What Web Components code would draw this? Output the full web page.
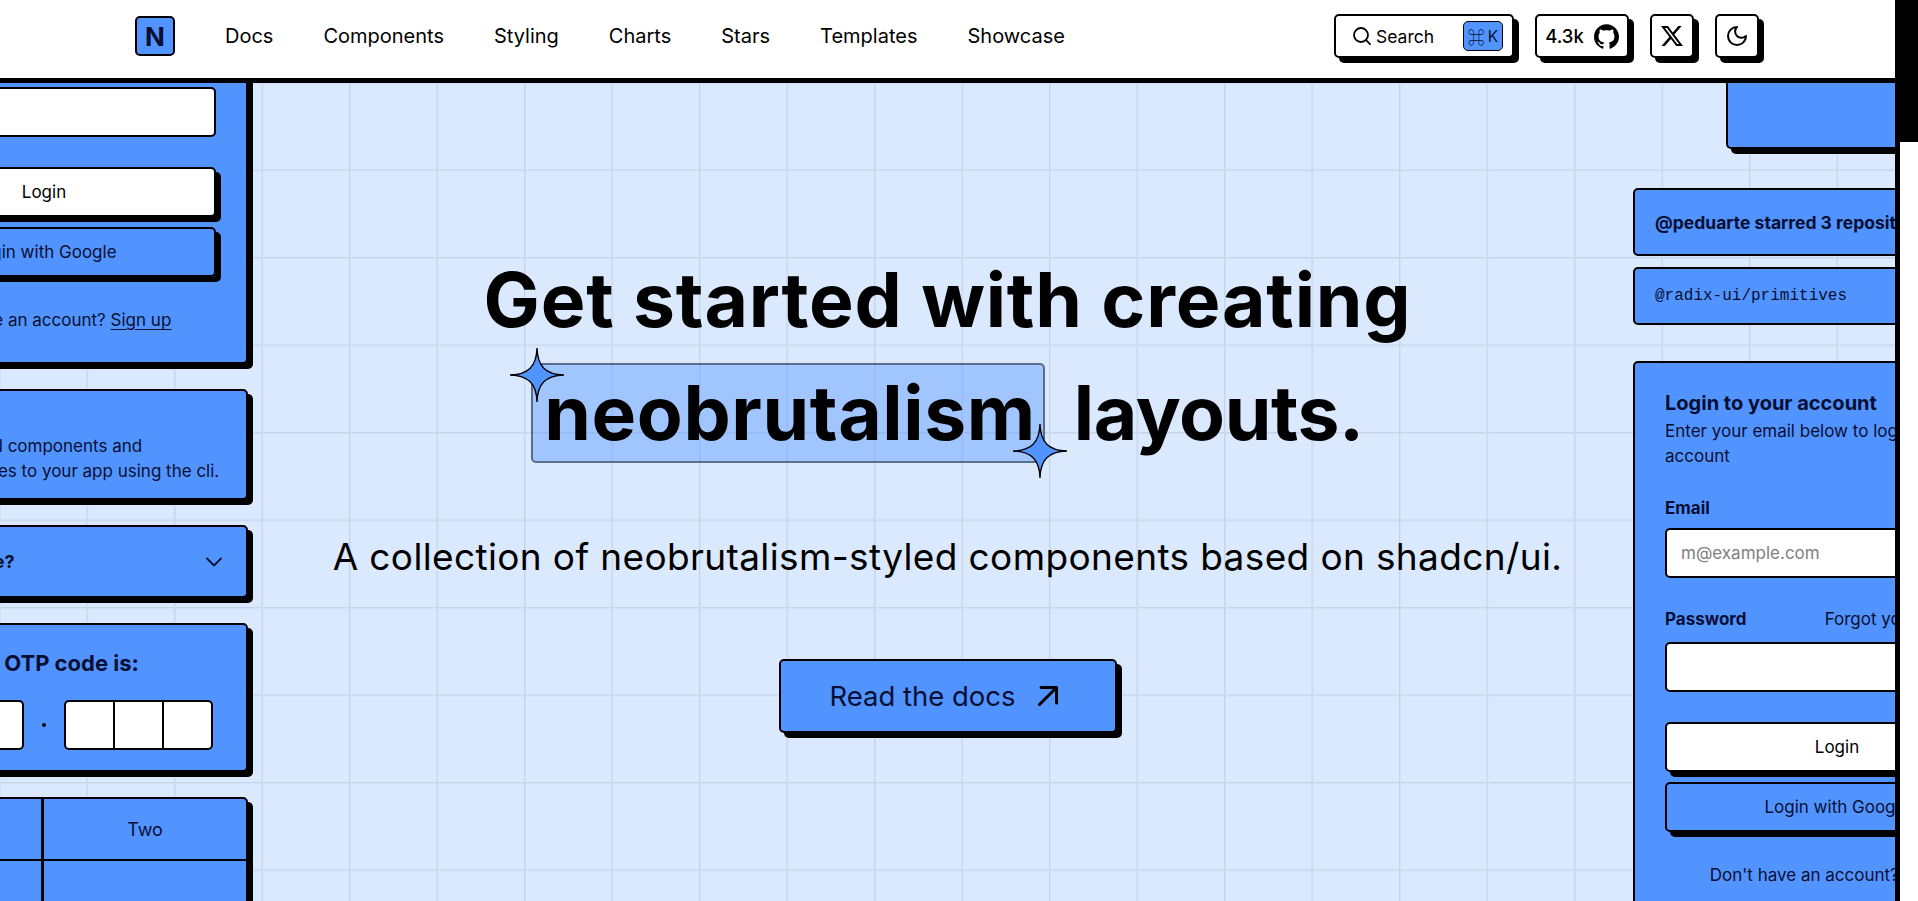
<!DOCTYPE html>
<html lang="en">
<head>
<meta charset="utf-8">
<title>neobrutalism components</title>
<style>
	html, body { margin: 0; padding: 0; height: 901px; overflow: hidden; background: #fff; }
	body { font-family: Inter, "Liberation Sans", sans-serif; color: #000; }
	app-shell { --main: #5294ff; --bg: #dbe9fe; --on-main: #060f33; }
</style>
</head>
<body>
<app-shell>
	<site-nav slot="nav"></site-nav>
	<hero-section slot="main"></hero-section>
</app-shell>

<script>
const icons = {
	search: `<svg width="18" height="18" viewBox="0 0 18 18" fill="none" stroke="currentColor" stroke-width="1.8" stroke-linecap="round"><circle cx="8" cy="8" r="7"/><path d="M13 13l4 4.2"/></svg>`,
	github: `<svg width="25" height="25" viewBox="0 0 24 24" fill="currentColor"><path d="M12 .297c-6.63 0-12 5.373-12 12 0 5.303 3.438 9.8 8.205 11.385.6.113.82-.258.82-.577 0-.285-.01-1.04-.015-2.04-3.338.724-4.042-1.61-4.042-1.61C4.422 18.07 3.633 17.7 3.633 17.7c-1.087-.744.084-.729.084-.729 1.205.084 1.838 1.236 1.838 1.236 1.07 1.835 2.809 1.305 3.495.998.108-.776.417-1.305.76-1.605-2.665-.3-5.466-1.332-5.466-5.93 0-1.31.465-2.38 1.235-3.22-.135-.303-.54-1.523.105-3.176 0 0 1.005-.322 3.3 1.23.96-.267 1.98-.399 3-.405 1.02.006 2.04.138 3 .405 2.28-1.552 3.285-1.23 3.285-1.23.645 1.653.24 2.873.12 3.176.765.84 1.23 1.91 1.23 3.22 0 4.61-2.805 5.625-5.475 5.92.42.36.81 1.096.81 2.22 0 1.606-.015 2.896-.015 3.286 0 .315.21.69.825.57C20.565 22.092 24 17.592 24 12.297c0-6.627-5.373-12-12-12"/></svg>`,
	x: `<svg width="22" height="22" viewBox="0 0 24 24" fill="currentColor"><path d="M18.901 1.153h3.68l-8.04 9.19L24 22.846h-7.406l-5.8-7.584-6.638 7.584H.474l8.6-9.83L0 1.154h7.594l5.243 6.932ZM17.61 20.644h2.039L6.486 3.24H4.298Z"/></svg>`,
	moon: `<svg width="24" height="24" viewBox="0 0 24 24" fill="none" stroke="currentColor" stroke-width="2" stroke-linecap="round" stroke-linejoin="round"><path d="M12 3a6 6 0 0 0 9 9 9 9 0 1 1-9-9Z"/></svg>`,
	arrow: `<svg width="24" height="24" viewBox="0 0 24 24" fill="none" stroke="#000" stroke-width="3" stroke-linecap="round" stroke-linejoin="round"><path d="M3.5 20.5L20 4"/><path d="M5 3.500H20.500V19"/></svg>`,
	chevron: `<svg width="16" height="10" viewBox="0 0 16 10" fill="none" stroke="currentColor" stroke-width="1.8" stroke-linecap="round" stroke-linejoin="round"><path d="M1 1.500l7 7 7-7"/></svg>`,
	star: `<svg width="54" height="54" viewBox="0 0 100 100"><path d="M50 0C51 34 66 49 100 50 66 51 51 66 50 100 49 66 34 51 0 50 34 49 49 34 50 0Z" fill="#5294ff" stroke="#000" stroke-width="2.5" stroke-linejoin="round"/></svg>`
};

// page frame: bars, border on the right, then the scroll rail
customElements.define("app-shell", class extends HTMLElement {
	connectedCallback() {
		this.attachShadow({ mode: "open" });
		this.shadowRoot.innerHTML = `
		<style>
			:host { display: grid; grid-template-columns: 1900px 18px; width: 1918px; height: 901px; overflow: hidden; }
			.page { display: flex; flex-direction: column; height: 901px; border-right: 5px solid #000; box-sizing: border-box; min-width: 0; }
			.rail { background: #fff; }
			.thumb { height: 142px; background: #000; }
		</style>
		<div class="page"><slot name="nav"></slot><slot name="main"></slot></div>
		<div class="rail"><div class="thumb"></div></div>`;
	}
});

customElements.define("neo-btn", class extends HTMLElement {
	connectedCallback() {
		this.attachShadow({ mode: "open" });
		this.shadowRoot.innerHTML = `
		<style>
			:host { display: inline-flex; box-sizing: border-box; align-items: center; justify-content: center; height: 44px; background: #fff; border: 2px solid #000; border-radius: 5px; box-shadow: 5px 5px 0 #000; }
		</style>
		<slot></slot>`;
	}
});

customElements.define("site-nav", class extends HTMLElement {
	connectedCallback() {
		const links = ["Docs", "Components", "Styling", "Charts", "Stars", "Templates", "Showcase"];
		this.attachShadow({ mode: "open" });
		this.shadowRoot.innerHTML = `
		<style>
			:host { display: flex; flex: none; height: 72px; align-items: center; background: #fff; border-bottom: 5px solid #000; padding: 0 136px 6px 135px; position: relative; z-index: 2; }
			.logo { width: 40px; height: 40px; box-sizing: border-box; display: flex; align-items: center; justify-content: center; background: var(--main); border: 2px solid #000; border-radius: 5px; font-size: 26px; font-weight: 700; color: var(--on-main); margin-right: 50px; }
			nav { display: flex; gap: 50px; font-size: 20px; font-weight: 400; flex: 1; }
			.tools { display: flex; align-items: center; gap: 21px; }
			.search { width: 180px; justify-content: flex-start; padding: 0 9px 0 17px; font-size: 17.500px; gap: 5px; }
			kbd { margin-left: auto; width: 40px; height: 30px; box-sizing: border-box; display: flex; align-items: center; justify-content: center; gap: 3px; background: var(--main); border: 1px solid #000; border-radius: 5px; color: var(--on-main); font: 400 15.500px Inter, sans-serif; }
			kbd span:first-child { font: 300 17px "Noto Sans CJK JP", "DejaVu Sans", sans-serif; }
			.stars { width: 94px; gap: 10px; font-size: 18.500px; font-weight: 500; }
			.square { width: 44px; }
			svg { display: block; }
		</style>
		<div class="logo">N</div>
		<nav>${links.map(l => `<span>${l}</span>`).join("")}</nav>
		<div class="tools">
			<neo-btn class="search">${icons.search}<span>Search</span><kbd><span>⌘</span><span>K</span></kbd></neo-btn>
			<neo-btn class="stars"><span>4.3k</span>${icons.github}</neo-btn>
			<neo-btn class="square">${icons.x}</neo-btn>
			<neo-btn class="square">${icons.moon}</neo-btn>
		</div>`;
	}
});

// same card is used on both sides, the viewport crops it
customElements.define("login-card", class extends HTMLElement {
	connectedCallback() {
		this.attachShadow({ mode: "open" });
		this.shadowRoot.innerHTML = `
		<style>
			:host { display: block; box-sizing: border-box; width: 408px; height: 558px; background: var(--main); color: var(--on-main); border: 2px solid #000; border-radius: 5px; box-shadow: 5px 5px 0 #000; padding: 26px 30px 0; font-size: 17px; }
			h3 { margin: 0; font-size: 20px; line-height: 28px; font-weight: 700; }
			p { margin: 2px 0 0; line-height: 25px; }
			label { display: flex; justify-content: space-between; line-height: 24px; font-weight: 700; font-size: 17px; }
			label span { font-weight: 400; font-size: 17px; }
			.field { box-sizing: border-box; height: 50px; background: #fff; border: 2px solid #000; border-radius: 5px; padding: 0 14px; display: flex; align-items: center; color: #808080; }
			.btn { box-sizing: border-box; height: 50px; display: flex; align-items: center; justify-content: center; border: 2px solid #000; border-radius: 5px; box-shadow: 5px 5px 0 #000; font-weight: 400; }
			.white { background: #fff; color: #000; }
			.foot { text-align: center; margin-top: 31px; line-height: 24px; }
			u { text-underline-offset: 3px; }
		</style>
		<h3>Login to your account</h3>
		<p>Enter your email below to login to your account</p>
		<label style="margin-top:27px">Email</label>
		<div class="field" style="margin-top:8px">m@example.com</div>
		<label style="margin-top:29px">Password<span>Forgot your password?</span></label>
		<div class="field" style="margin-top:11px"></div>
		<div class="btn white" style="margin-top:30px">Login</div>
		<div class="btn" style="margin-top:10px">Login with Google</div>
		<div class="foot">Don't have an account? <u>Sign up</u></div>`;
	}
});

customElements.define("neo-card", class extends HTMLElement {
	connectedCallback() {
		this.attachShadow({ mode: "open" });
		this.shadowRoot.innerHTML = `
		<style>
			:host { display: block; box-sizing: border-box; width: 408px; background: var(--main); color: var(--on-main); border: 2px solid #000; border-radius: 5px; box-shadow: 5px 5px 0 #000; overflow: hidden; }
			:host([flat]) { box-shadow: none; }
		</style>
		<slot></slot>`;
	}
});

customElements.define("left-stack", class extends HTMLElement {
	connectedCallback() {
		this.attachShadow({ mode: "open" });
		this.shadowRoot.innerHTML = `
		<style>
			:host { display: flex; flex-direction: column; align-items: flex-end; gap: 25px; padding-right: 14px; margin-top: -277px; font-size: 17px; }
			.alert { height: 111px; padding: 43px 10px 0 61px; box-sizing: border-box; line-height: 25px; white-space: nowrap; }
			.alert b { display: block; margin-top: -25px; }
			.accordion { height: 73px; display: flex; align-items: center; justify-content: space-between; padding: 0 24px 0 33px; box-sizing: border-box; font-weight: 700; font-size: 18px; }
			svg { display: block; }
			.otp { height: 149px; box-sizing: border-box; text-align: center; padding-top: 24px; }
			.otp h4 { margin: 0; font-size: 22px; line-height: 28px; font-weight: 700; }
			.groups { display: flex; justify-content: center; align-items: center; margin-top: 23px; gap: 18px; }
			.group { display: flex; background: #fff; border: 2px solid #000; border-radius: 5px; height: 50px; box-sizing: border-box; }
			.group i { width: 47px; border-left: 2px solid #000; }
			.group i:first-child { border-left: 0; }
			.dot { width: 4px; height: 4px; border-radius: 50%; background: #000; }
			.table { height: 200px; display: grid; grid-template-columns: 202px 1fr; grid-template-rows: 62px 1fr; font-size: 18px; }
			.table div { display: flex; align-items: center; justify-content: center; }
			.table div:nth-child(odd) { border-right: 3px solid #000; }
			.table div:nth-child(-n+2) { border-bottom: 2px solid #000; }
		</style>
		<login-card></login-card>
		<neo-card class="alert"><b>Heads up!</b>You can add components and<br>dependencies to your app using the cli.</neo-card>
		<neo-card class="accordion"><span>Is it accessible?</span>${icons.chevron}</neo-card>
		<neo-card class="otp"><h4>Your OTP code is:</h4>
			<div class="groups">
				<div class="group"><i></i><i></i><i></i></div>
				<div class="dot"></div>
				<div class="group"><i></i><i></i><i></i></div>
			</div>
		</neo-card>
		<neo-card class="table"><div>One</div><div>Two</div><div></div><div></div></neo-card>`;
	}
});

customElements.define("right-stack", class extends HTMLElement {
	connectedCallback() {
		this.attachShadow({ mode: "open" });
		this.shadowRoot.innerHTML = `
		<style>
			:host { display: flex; flex-direction: column; align-items: flex-start; font-size: 17px; }
			.top { width: 400px; height: 66px; margin-left: 93px; border-top: 0; border-radius: 0 0 5px 5px; }
			.row { display: flex; align-items: center; padding-left: 20px; box-sizing: border-box; white-space: nowrap; }
			.repo { height: 68px; margin-top: 39px; font-weight: 700; font-size: 17.500px; }
			.mono { height: 58px; margin-top: 11px; font: 400 16px "Liberation Mono", monospace; }
			login-card { margin-top: 36px; }
		</style>
		<neo-card class="top"></neo-card>
		<neo-card flat class="row repo">@peduarte starred 3 repositories</neo-card>
		<neo-card flat class="row mono">@radix-ui/primitives</neo-card>
		<login-card></login-card>`;
	}
});

customElements.define("spark-mark", class extends HTMLElement {
	connectedCallback() {
		this.attachShadow({ mode: "open" });
		this.shadowRoot.innerHTML = `
		<style>
			:host { display: block; position: absolute; width: 54px; height: 54px; z-index: 1; }
			svg { display: block; }
		</style>
		${icons.star}`;
	}
});

customElements.define("hero-section", class extends HTMLElement {
	connectedCallback() {
		this.attachShadow({ mode: "open" });
		this.shadowRoot.innerHTML = `
		<style>
			:host { display: grid; grid-template-columns: 262px 1fr 262px; flex: 1; min-height: 0; overflow: hidden; background-color: var(--bg); background-image: linear-gradient(to right, #c6d4e9 1px, #d3e0f4 1px, #d3e0f4 2px, transparent 2px), linear-gradient(to bottom, #c6d4e9 1px, #d3e0f4 1px, #d3e0f4 2px, transparent 2px); background-size: 87.500px 87.500px; background-position: -1px -1px; }
			.center { display: flex; flex-direction: column; align-items: center; padding-top: 160px; }
			h1 { margin: 0; font-size: 75px; line-height: 113px; font-weight: 700; text-align: center; letter-spacing: 0.800px; white-space: nowrap; }
			.mark { position: relative; display: inline-block; box-sizing: border-box; height: 100px; line-height: 96px; padding: 0 7px 0 11px; margin-right: 29px; letter-spacing: 0.600px; background: rgba(82, 148, 255, 0.42); border: 2px solid rgba(0, 0, 0, 0.45); border-radius: 5px; vertical-align: top; margin-top: 7px; }
			.tl { left: -23px; top: -17px; }
			.br { right: -24px; bottom: -17px; }
			.tail { letter-spacing: -0.400px; }
			.lead { margin: 63px 0 0; font-size: 37px; line-height: 50px; letter-spacing: 0.370px; white-space: nowrap; }
			.cta { display: flex; align-items: center; justify-content: center; gap: 20px; box-sizing: border-box; width: 338px; height: 74px; margin-top: 77px; padding-right: 6px; background: var(--main); color: var(--on-main); border: 2px solid #000; border-radius: 5px; box-shadow: 5px 5px 0 #000; font-size: 27.500px; font-weight: 400; }
			svg { display: block; }
		</style>
		<left-stack></left-stack>
		<div class="center">
			<h1>Get started with creating<br><span class="mark"><spark-mark class="tl"></spark-mark>neobrutalism<spark-mark class="br"></spark-mark></span><span class="tail">layouts.</span></h1>
			<p class="lead">A collection of neobrutalism-styled components based on shadcn/ui.</p>
			<div class="cta"><span>Read the docs</span>${icons.arrow}</div>
		</div>
		<right-stack></right-stack>`;
	}
});
</script>
</body>
</html>
